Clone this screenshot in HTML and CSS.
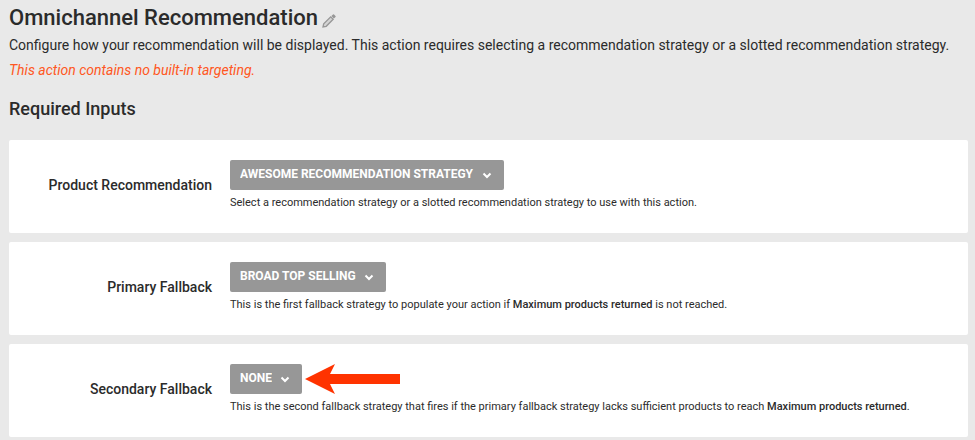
FILE: index.html
```html
<!DOCTYPE html>
<html lang="en">
  <head>
    <meta charset="UTF-8" />
    <meta name="viewport" content="width=device-width, initial-scale=1.0" />
    <title>Omnichannel Recommendation</title>
    <link rel="stylesheet" href="styles.css">
  </head>
  <body>
    <header class="page-header">
      <div class="title-row">
        <h1>Omnichannel Recommendation</h1>
        <button class="edit-button" type="button" aria-label="Edit name">
          <svg viewBox="0 0 14 14" width="14" height="14">
            <path d="M1 13l.7-3.2 7-7 2.5 2.5-7 7z" fill="#d4d4d4" stroke="#979797" stroke-width="1.3" />
            <path d="M9.4 2.1L11 .5Q11.5 0 12 .5L13.5 2Q14 2.5 13.5 3L11.9 4.6z" fill="#979797" />
          </svg>
        </button>
      </div>
      <p class="description">
        Configure how your recommendation will be displayed. This action requires selecting a recommendation strategy or a slotted recommendation strategy.
      </p>
      <p class="notice">This action contains no built-in targeting.</p>
    </header>

    <main>
      <h2>Required Inputs</h2>

      <div class="card">
        <label for="product">Product Recommendation</label>
        <div class="field">
          <div class="control">
            <div class="dropdown">
              <select id="product">
                <option>AWESOME RECOMMENDATION STRATEGY</option>
              </select>
              <svg class="chevron" viewBox="0 0 10 7" width="10" height="7">
                <path d="M1.5 1.5L5 5l3.500-3.500" />
              </svg>
            </div>
          </div>
          <p class="hint">Select a recommendation strategy or a slotted recommendation strategy to use with this action.</p>
        </div>
      </div>

      <div class="card">
        <label for="primary">Primary Fallback</label>
        <div class="field">
          <div class="control">
            <div class="dropdown">
              <select id="primary">
                <option>BROAD TOP SELLING</option>
              </select>
              <svg class="chevron" viewBox="0 0 10 7" width="10" height="7">
                <path d="M1.5 1.5L5 5l3.500-3.500" />
              </svg>
            </div>
          </div>
          <p class="hint">This is the first fallback strategy to populate your action if <b>Maximum products returned</b> is not reached.</p>
        </div>
      </div>

      <div class="card">
        <label for="secondary">Secondary Fallback</label>
        <div class="field">
          <div class="control">
            <div class="dropdown">
              <select id="secondary">
                <option>NONE</option>
              </select>
              <svg class="chevron" viewBox="0 0 10 7" width="10" height="7">
                <path d="M1.5 1.5L5 5l3.500-3.500" />
              </svg>
            </div>
            <svg class="arrow" viewBox="0 0 95 30" width="95" height="30">
              <path d="M0 15L30 0 25 10H95V20H25L30 30z" fill="#ff3300" />
            </svg>
          </div>
          <p class="hint">This is the second fallback strategy that fires if the primary fallback strategy lacks sufficient products to reach <b>Maximum products returned</b>.</p>
        </div>
      </div>
    </main>
  </body>
</html>
```
FILE: styles.css
```css
* {
  box-sizing: border-box;
  margin: 0;
  padding: 0;
}
body {
  font-family: Roboto, "Liberation Sans", sans-serif;
  font-size: 14px;
  color: #2b2b2b;
  background-color: #e9e9e9;
  padding: 4px 7px 4px 9px;
}

/* Header */
.title-row {
  display: flex;
  align-items: flex-end;
  gap: 4px;
}
h1 {
  font-size: 22px;
  line-height: 28px;
  font-weight: 500;
}
.edit-button {
  display: flex;
  padding-bottom: 4px;
  border: none;
  background: none;
  cursor: pointer;
}
.description {
  margin-top: 3px;
  line-height: 20px;
}
.notice {
  margin-top: 5px;
  line-height: 20px;
  font-style: italic;
  color: #ff5722;
}
h2 {
  margin: 17px 0 19px;
  font-size: 18px;
  line-height: 24px;
  font-weight: 500;
}

/* Input cards */
.card {
  display: flex;
  align-items: center;
  gap: 18px;
  padding: 20px 18px 21px 0;
  border-radius: 2px;
  background-color: #fff;
}
.card + .card {
  margin-top: 9px;
}
label {
  flex: 0 0 203px;
  padding-bottom: 2px;
  text-align: right;
  font-weight: 500;
  line-height: 20px;
}
.field {
  flex: 1;
}
.control {
  display: flex;
  gap: 3px;
}
.dropdown {
  position: relative;
}
select {
  appearance: none;
  display: block;
  height: 30px;
  padding: 0 30px 2px 10px;
  border: none;
  border-radius: 2px;
  background-color: #979797;
  color: #fff;
  font-family: inherit;
  font-size: 12px;
  font-weight: 700;
  cursor: pointer;
}
.chevron {
  position: absolute;
  top: 12px;
  right: 12px;
  fill: none;
  stroke: #fff;
  stroke-width: 2;
  pointer-events: none;
}
.hint {
  margin-top: 4px;
  font-size: 11px;
  line-height: 18px;
}
.hint b {
  font-weight: 500;
}
```
